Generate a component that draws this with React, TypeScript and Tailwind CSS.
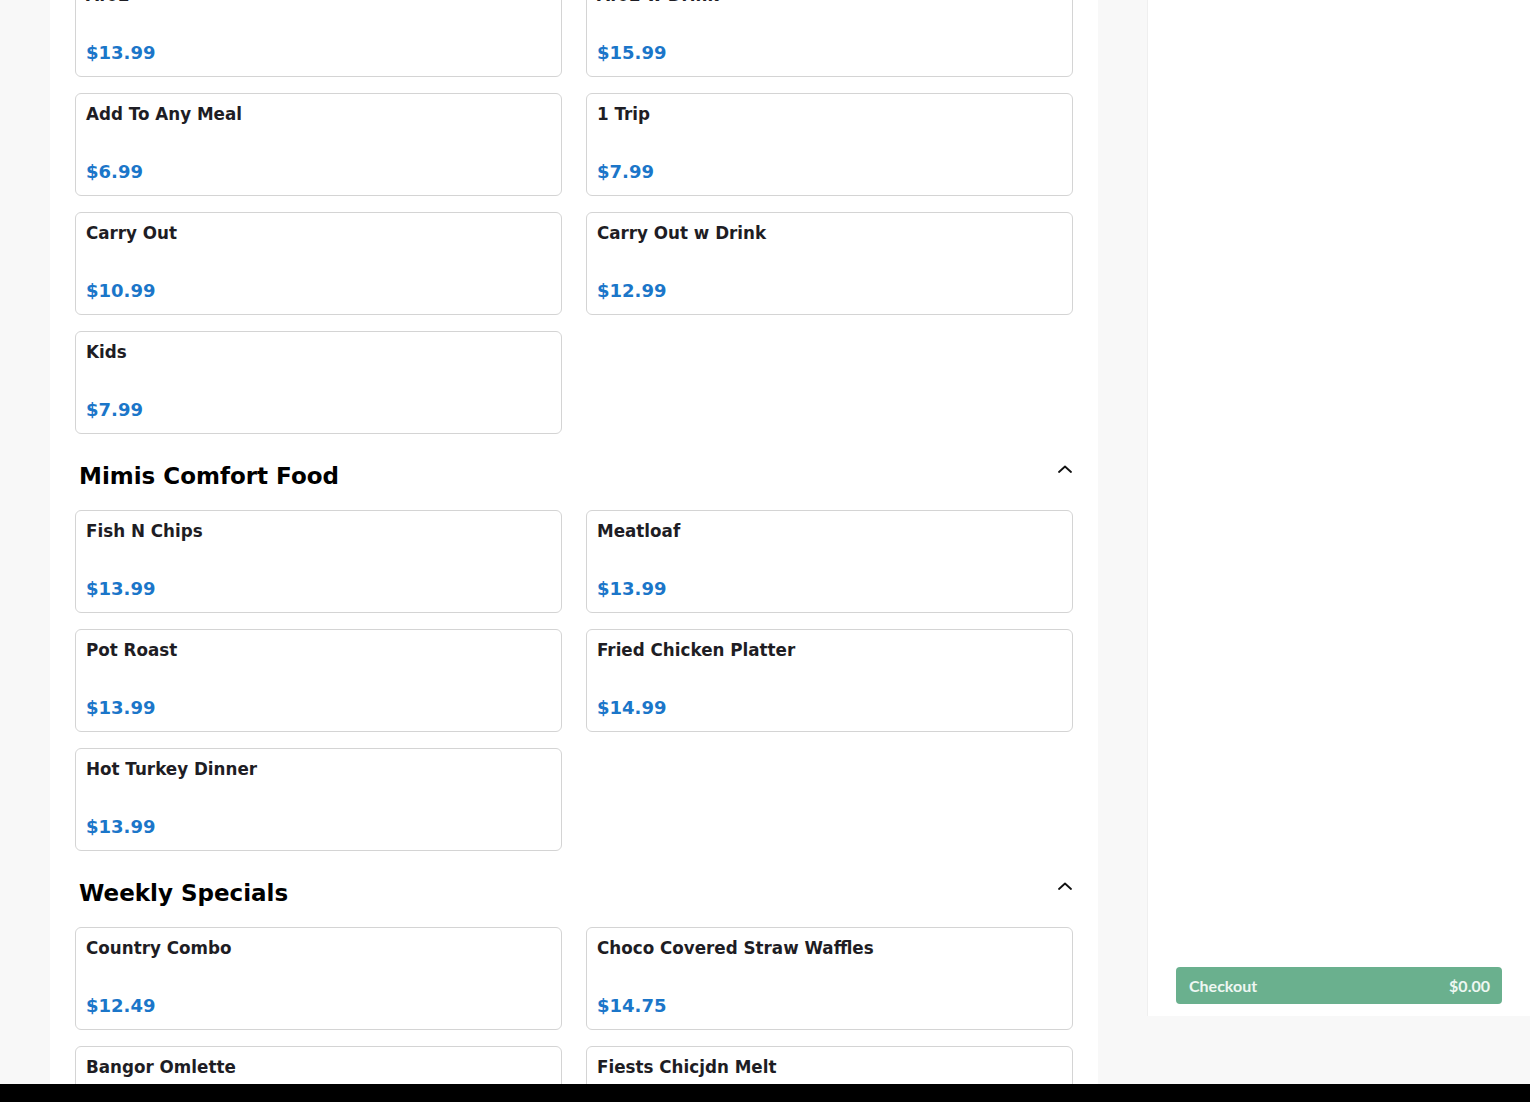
type Item = { name: string; price: string };
type Section = { title?: string; items: Item[] };

const sections: Section[] = [
  {
    items: [
      { name: "Af02", price: "$13.99" },
      { name: "Af02 w Drink", price: "$15.99" },
      { name: "Add To Any Meal", price: "$6.99" },
      { name: "1 Trip", price: "$7.99" },
      { name: "Carry Out", price: "$10.99" },
      { name: "Carry Out w Drink", price: "$12.99" },
      { name: "Kids", price: "$7.99" },
    ],
  },
  {
    title: "Mimis Comfort Food",
    items: [
      { name: "Fish N Chips", price: "$13.99" },
      { name: "Meatloaf", price: "$13.99" },
      { name: "Pot Roast", price: "$13.99" },
      { name: "Fried Chicken Platter", price: "$14.99" },
      { name: "Hot Turkey Dinner", price: "$13.99" },
    ],
  },
  {
    title: "Weekly Specials",
    items: [
      { name: "Country Combo", price: "$12.49" },
      { name: "Choco Covered Straw Waffles", price: "$14.75" },
      { name: "Bangor Omlette", price: "$11.99" },
      { name: "Fiests Chicjdn Melt", price: "$12.99" },
    ],
  },
];

const MenuCard = ({ item }: { item: Item }) => (
  <div className="h-[103px] flex flex-col justify-between border border-[#d4d4d4] rounded-[6px] bg-white px-[10px] pt-[8px] pb-[10px]">
    <div className="text-[16.75px] leading-[24px] font-bold text-[#1e1d24]">{item.name}</div>
    <div className="text-[18px] leading-[26px] font-bold text-[#1b76c9]">{item.price}</div>
  </div>
);

const SectionHeader = ({ title }: { title: string }) => (
  <div className="flex items-start justify-between pl-1 pr-[1px] mt-[25px] mb-[17px] h-[34px]">
    <h2 className="text-[23px] leading-[34px] font-bold text-black">{title}</h2>
    <svg width="14" height="8" viewBox="0 0 14 8" className="mt-[6px]" fill="none">
      <polyline points="1,7 7,1.5 13,7" stroke="#111" strokeWidth="1.8" strokeLinecap="round" strokeLinejoin="round" />
    </svg>
  </div>
);

const App = () => {
  return (
    <div className="w-[1530px] h-[1102px] flex flex-col overflow-hidden" style={{ fontFamily: "'DejaVu Sans', sans-serif" }}>
      <div className="h-[1084px] flex bg-[#f8f8f8] overflow-hidden">
        <div className="ml-[50px] w-[1048px] bg-white px-[25px] overflow-hidden">
          <div className="-mt-[26px]">
            {sections.map((section, i) => (
              <div key={i}>
                {section.title && <SectionHeader title={section.title} />}
                <div className="grid grid-cols-2 gap-x-[24px] gap-y-[16px]">
                  {section.items.map((item) => (
                    <MenuCard key={item.name} item={item} />
                  ))}
                </div>
              </div>
            ))}
          </div>
        </div>
        <aside className="ml-[49px] w-[383px] h-[1016px] bg-white border-l border-[#efefef] flex flex-col justify-end px-[28px] pb-[12px]">
          <button
            className="h-[37px] w-full flex items-center justify-between rounded-[4px] bg-[#6ab08e] pl-[13px] pr-[12px] text-[16px] font-bold text-[#eef7f2]"
            style={{ fontFamily: "Lato, 'Open Sans', sans-serif" }}
          >
            <span>Checkout</span>
            <span>$0.00</span>
          </button>
        </aside>
      </div>
      <div className="h-[18px] bg-black" />
    </div>
  );
};

export default App;
